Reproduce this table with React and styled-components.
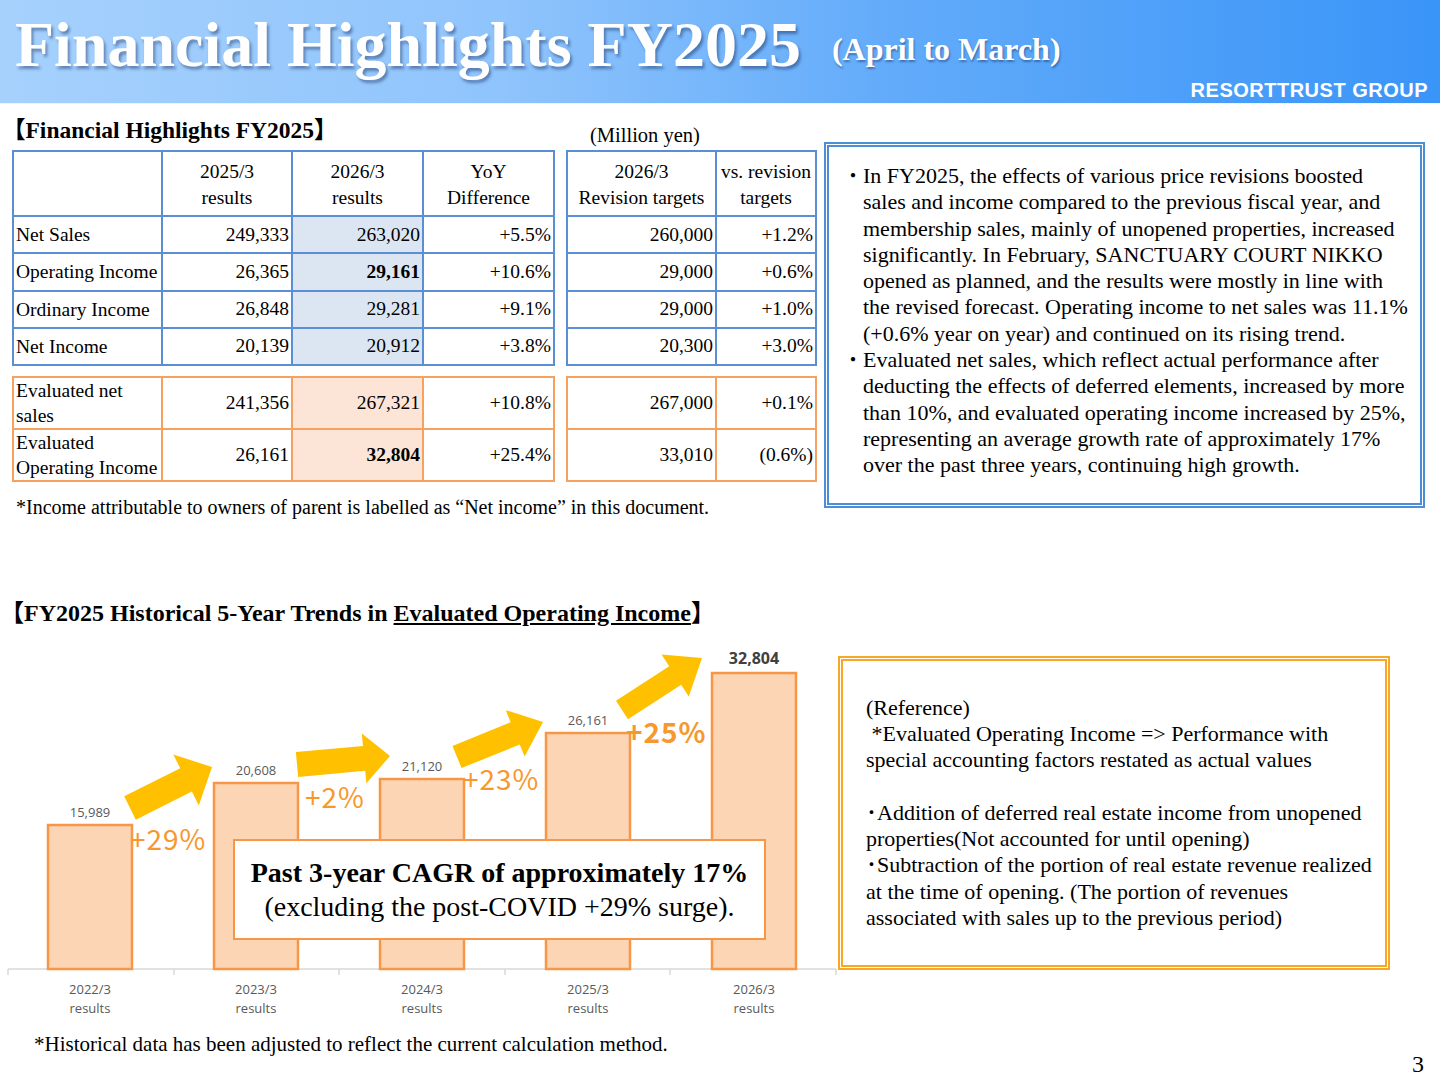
import React from 'react';
import styled, { createGlobalStyle } from 'styled-components';

const GlobalStyle = createGlobalStyle`
  html, body {
    margin: 0;
    padding: 0;
    background: #fff;
  }
`;

const serif = `"Liberation Serif", "Noto Sans CJK JP", serif`;

const Page = styled.div`
  width: 1440px;
  height: 1080px;
  overflow: hidden;
  background: #fff;
  font-family: ${serif};
  color: #000;
  display: flex;
  flex-direction: column;
`;

const Header = styled.header`
  height: 103px;
  flex: none;
  display: flex;
  flex-direction: column;
  background: linear-gradient(90deg, #a6d1fd 0%, #8fc4fc 35%, #62abfa 62%, #3a95f8 100%);
  border-bottom: 1px solid #eaf3fe;
`;

const TitleRow = styled.div`
  display: flex;
  align-items: flex-start;
  padding: 13px 0 0 15px;
`;

const Title = styled.h1`
  margin: 0;
  font-size: 64px;
  line-height: 64px;
  font-weight: bold;
  color: #fff;
  text-shadow: 2px 3px 3px rgba(20, 40, 90, 0.45);
`;

const Subtitle = styled.span`
  margin: 20px 0 0 31px;
  font-size: 32px;
  line-height: 32px;
  font-weight: bold;
  color: #fff;
  text-shadow: 1px 2px 2px rgba(20, 40, 90, 0.45);
`;

const Brand = styled.div`
  margin-top: auto;
  align-self: flex-end;
  padding: 0 12px 3px 0;
  font-family: "Liberation Sans", Arial, sans-serif;
  font-weight: bold;
  font-size: 20px;
  line-height: 20px;
  letter-spacing: 0.5px;
  color: #fff;
`;

const TopSection = styled.section`
  display: flex;
  align-items: flex-start;
  padding-left: 12px;
`;

const TableGrid = styled.div`
  display: grid;
  grid-template-columns: 541px 249px;
  column-gap: 13px;
  width: 804px;
`;

const SectionTitle = styled.h2`
  margin: 0;
  font-size: ${(p) => p.$size}px;
  line-height: 28px;
  font-weight: bold;
  white-space: nowrap;
  margin-left: ${(p) => p.$indent || 0}px;
`;

const HeadingCell = styled.div`
  height: 46px;
  padding-top: 12px;
  box-sizing: border-box;
`;

const UnitNote = styled.div`
  align-self: end;
  font-size: 20.5px;
  line-height: 28px;
  padding: 0 0 1px 24px;
`;

const Table = styled.table`
  border-collapse: collapse;
  table-layout: fixed;
  width: 100%;
  font-size: 19.5px;
  margin-top: ${(p) => p.$gap || 0}px;

  td, th {
    border: 2px solid ${(p) => p.$line};
    padding: 0 2px;
    font-weight: normal;
    white-space: nowrap;
  }
`;

const HeadRow = styled.tr`
  height: 65px;
  th {
    text-align: center;
    line-height: 26px;
    padding-top: 2px;
  }
`;

const BodyRow = styled.tr`
  height: ${(p) => p.$h}px;
`;

const Label = styled.td`
  text-align: left;
  line-height: 25px;
  white-space: normal !important;
`;

const Num = styled.td`
  text-align: right;
  background: ${(p) => p.$fill || 'transparent'};
  font-weight: ${(p) => (p.$bold ? 'bold' : 'normal')} !important;
`;

const Footnote = styled.p`
  grid-column: 1 / -1;
  margin: 12px 0 0 4px;
  font-size: 20px;
  line-height: 26px;
  white-space: nowrap;
`;

const SummaryBox = styled.div`
  margin: 38px 0 0 8px;
  width: 601px;
  height: 366px;
  box-sizing: border-box;
  border: 5px double #4d8fd6;
  padding: 16px 0 0 14px;
  font-size: 22px;
  line-height: 26.3px;
`;

const Bullet = styled.div`
  display: flex;
`;

const Dot = styled.span`
  width: 20px;
  flex: none;
  font-size: 20px;
`;

const Line = styled.div`
  white-space: pre;
  min-height: 26.3px;
`;

const BottomSection = styled.section`
  margin-top: 79px;
`;

const ChartRow = styled.div`
  display: flex;
  align-items: flex-start;
  margin-top: 13px;
`;

const ChartArea = styled.div`
  position: relative;
  width: 836px;
  height: 385px;
  flex: none;

  svg {
    display: block;
    overflow: visible;
  }
`;

const CagrBox = styled.div`
  position: absolute;
  left: 233px;
  top: 199px;
  width: 533px;
  height: 101px;
  box-sizing: border-box;
  border: 2px solid #f79646;
  background: #fff;
  display: flex;
  flex-direction: column;
  align-items: center;
  justify-content: center;
  font-size: 28px;
  line-height: 34px;
  white-space: nowrap;
`;

const CagrMain = styled.div`
  font-weight: bold;
`;

const ReferenceBox = styled.div`
  margin: 16px 0 0 2px;
  width: 552px;
  height: 314px;
  box-sizing: border-box;
  border: 5px double #f9a825;
  padding-left: 23px;
  display: flex;
  flex-direction: column;
  justify-content: center;
  font-size: 22px;
  line-height: 26.3px;
`;

const Footer = styled.footer`
  display: flex;
  justify-content: space-between;
  align-items: flex-start;
  margin-top: 6px;
  padding: 0 16px 0 34px;
`;

const FootNote2 = styled.div`
  font-size: 21px;
  line-height: 26px;
`;

const PageNum = styled.div`
  font-size: 24px;
  line-height: 28px;
  margin-top: 19px;
`;

const blueRows = [
  ['Net Sales', '249,333', '263,020', '+5.5%', '260,000', '+1.2%'],
  ['Operating Income', '26,365', '29,161', '+10.6%', '29,000', '+0.6%', true],
  ['Ordinary Income', '26,848', '29,281', '+9.1%', '29,000', '+1.0%'],
  ['Net Income', '20,139', '20,912', '+3.8%', '20,300', '+3.0%'],
];

const orangeRows = [
  ['Evaluated net sales', '241,356', '267,321', '+10.8%', '267,000', '+0.1%'],
  ['Evaluated Operating Income', '26,161', '32,804', '+25.4%', '33,010', '(0.6%)', true],
];

const BLUE = '#5b8fd5';
const ORANGE = '#f6a15e';

const bars = [
  { x: 48, top: 185, label: '15,989', cat: '2022/3' },
  { x: 214, top: 143, label: '20,608', cat: '2023/3' },
  { x: 380, top: 139, label: '21,120', cat: '2024/3' },
  { x: 546, top: 93, label: '26,161', cat: '2025/3' },
  { x: 712, top: 33, label: '32,804', cat: '2026/3', bold: true },
];

const arrows = [
  { t: [130, 168], p: [212, 127], sw: 26, hw: 57, hl: 29 },
  { t: [297, 124.5], p: [390, 116], sw: 25, hw: 50, hl: 26 },
  { t: [457, 117], p: [543, 82], sw: 24, hw: 50, hl: 30 },
  { t: [622, 70], p: [702, 18], sw: 22, hw: 50, hl: 32 },
];

const growth = [
  { x: 130, y: 210, text: '+29%' },
  { x: 305, y: 168, text: '+2%' },
  { x: 463, y: 150, text: '+23%' },
  { x: 626, y: 103, text: '+25%', bold: true },
];

function arrowPoints({ t, p, sw, hw, hl }) {
  const dx = p[0] - t[0];
  const dy = p[1] - t[1];
  const len = Math.hypot(dx, dy);
  const ux = dx / len;
  const uy = dy / len;
  const nx = -uy;
  const ny = ux;
  const bx = p[0] - ux * hl;
  const by = p[1] - uy * hl;
  const pts = [
    [t[0] + nx * sw / 2, t[1] + ny * sw / 2],
    [bx + nx * sw / 2, by + ny * sw / 2],
    [bx + nx * hw / 2, by + ny * hw / 2],
    p,
    [bx - nx * hw / 2, by - ny * hw / 2],
    [bx - nx * sw / 2, by - ny * sw / 2],
    [t[0] - nx * sw / 2, t[1] - ny * sw / 2],
  ];
  return pts.map((q) => q.join(',')).join(' ');
}

function Chart() {
  const base = 329;
  return (
    <svg width="836" height="385" viewBox="0 0 836 385">
      <line x1="8" y1={base} x2="836" y2={base} stroke="#d9d9d9" strokeWidth="1.5" />
      {[8, 174, 339, 505, 670, 836].map((x) => (
        <line key={x} x1={x} y1={base} x2={x} y2={base + 6} stroke="#d9d9d9" strokeWidth="1.5" />
      ))}
      {bars.map((b) => (
        <g key={b.cat}>
          <rect x={b.x} y={b.top} width="84" height={base - b.top} fill="#fcd5b5" stroke="#f79646" strokeWidth="2.5" />
          <text
            x={b.x + 42}
            y={b.top - (b.bold ? 9 : 8)}
            textAnchor="middle"
            fontFamily="'Open Sans', sans-serif"
            fontSize={b.bold ? 16 : 13}
            fontWeight={b.bold ? 'bold' : 'normal'}
            fill={b.bold ? '#404040' : '#595959'}
          >
            {b.label}
          </text>
          <text x={b.x + 42} y="354" textAnchor="middle" fontFamily="'Open Sans', sans-serif" fontSize="13" fill="#595959">
            {b.cat}
          </text>
          <text x={b.x + 42} y="373" textAnchor="middle" fontFamily="'Open Sans', sans-serif" fontSize="13" fill="#595959">
            results
          </text>
        </g>
      ))}
      {arrows.map((a, i) => (
        <polygon key={i} points={arrowPoints(a)} fill="#ffc000" />
      ))}
      {growth.map((g) => (
        <text
          key={g.text}
          x={g.x}
          y={g.y}
          fontFamily="'Noto Sans CJK JP', 'Noto Sans', sans-serif"
          fontSize="28"
          fontWeight={g.bold ? 'bold' : 'normal'}
          fill="#f7982e"
          letterSpacing="1"
        >
          {g.text}
        </text>
      ))}
    </svg>
  );
}

export default function App() {
  return (
    <Page>
      <GlobalStyle />
      <Header>
        <TitleRow>
          <Title>Financial Highlights FY2025</Title>
          <Subtitle>(April to March)</Subtitle>
        </TitleRow>
        <Brand>RESORTTRUST GROUP</Brand>
      </Header>

      <TopSection>
        <TableGrid>
          <HeadingCell>
            <SectionTitle $size={23.5} $indent={-10}>【Financial Highlights FY2025】</SectionTitle>
          </HeadingCell>
          <UnitNote>(Million yen)</UnitNote>

          <Table $line={BLUE}>
            <colgroup>
              <col style={{ width: 149 }} />
              <col style={{ width: 130 }} />
              <col style={{ width: 131 }} />
              <col style={{ width: 131 }} />
            </colgroup>
            <thead>
              <HeadRow>
                <th />
                <th>2025/3<br />results</th>
                <th>2026/3<br />results</th>
                <th>YoY<br />Difference</th>
              </HeadRow>
            </thead>
            <tbody>
              {blueRows.map((r) => (
                <BodyRow key={r[0]} $h={37.25}>
                  <Label>{r[0]}</Label>
                  <Num>{r[1]}</Num>
                  <Num $fill="#dce6f2" $bold={r[6]}>{r[2]}</Num>
                  <Num>{r[3]}</Num>
                </BodyRow>
              ))}
            </tbody>
          </Table>

          <Table $line={BLUE}>
            <colgroup>
              <col style={{ width: 149 }} />
              <col style={{ width: 100 }} />
            </colgroup>
            <thead>
              <HeadRow>
                <th>2026/3<br />Revision targets</th>
                <th>vs. revision<br />targets</th>
              </HeadRow>
            </thead>
            <tbody>
              {blueRows.map((r) => (
                <BodyRow key={r[0]} $h={37.25}>
                  <Num>{r[4]}</Num>
                  <Num>{r[5]}</Num>
                </BodyRow>
              ))}
            </tbody>
          </Table>

          <Table $line={ORANGE} $gap={10}>
            <colgroup>
              <col style={{ width: 149 }} />
              <col style={{ width: 130 }} />
              <col style={{ width: 131 }} />
              <col style={{ width: 131 }} />
            </colgroup>
            <tbody>
              {orangeRows.map((r) => (
                <BodyRow key={r[0]} $h={51.5}>
                  <Label>{r[0]}</Label>
                  <Num>{r[1]}</Num>
                  <Num $fill="#fce4d6" $bold={r[6]}>{r[2]}</Num>
                  <Num>{r[3]}</Num>
                </BodyRow>
              ))}
            </tbody>
          </Table>

          <Table $line={ORANGE} $gap={10}>
            <colgroup>
              <col style={{ width: 149 }} />
              <col style={{ width: 100 }} />
            </colgroup>
            <tbody>
              {orangeRows.map((r) => (
                <BodyRow key={r[0]} $h={51.5}>
                  <Num>{r[4]}</Num>
                  <Num>{r[5]}</Num>
                </BodyRow>
              ))}
            </tbody>
          </Table>

          <Footnote>*Income attributable to owners of parent is labelled as “Net income” in this document.</Footnote>
        </TableGrid>

        <SummaryBox>
          <Bullet>
            <Dot>・</Dot>
            <div>
              <Line>In FY2025, the effects of various price revisions boosted</Line>
              <Line>sales and income compared to the previous fiscal year, and</Line>
              <Line>membership sales, mainly of unopened properties, increased</Line>
              <Line>significantly. In February, SANCTUARY COURT NIKKO</Line>
              <Line>opened as planned, and the results were mostly in line with</Line>
              <Line>the revised forecast. Operating income to net sales was 11.1%</Line>
              <Line>(+0.6% year on year) and continued on its rising trend.</Line>
            </div>
          </Bullet>
          <Bullet>
            <Dot>・</Dot>
            <div>
              <Line>Evaluated net sales, which reflect actual performance after</Line>
              <Line>deducting the effects of deferred elements, increased by more</Line>
              <Line>than 10%, and evaluated operating income increased by 25%,</Line>
              <Line>representing an average growth rate of approximately 17%</Line>
              <Line>over the past three years, continuing high growth.</Line>
            </div>
          </Bullet>
        </SummaryBox>
      </TopSection>

      <BottomSection>
        <SectionTitle $size={24}>
          【FY2025 Historical 5-Year Trends in <u>Evaluated Operating Income</u>】
        </SectionTitle>
        <ChartRow>
          <ChartArea>
            <Chart />
            <CagrBox>
              <CagrMain>Past 3-year CAGR of approximately 17%</CagrMain>
              <div>(excluding the post-COVID +29% surge).</div>
            </CagrBox>
          </ChartArea>
          <ReferenceBox>
            <Line>(Reference)</Line>
            <Line> *Evaluated Operating Income =&gt; Performance with</Line>
            <Line>special accounting factors restated as actual values</Line>
            <Line> </Line>
            <Line>･Addition of deferred real estate income from unopened</Line>
            <Line>properties(Not accounted for until opening)</Line>
            <Line>･Subtraction of the portion of real estate revenue realized</Line>
            <Line>at the time of opening. (The portion of revenues</Line>
            <Line>associated with sales up to the previous period)</Line>
          </ReferenceBox>
        </ChartRow>
        <Footer>
          <FootNote2>*Historical data has been adjusted to reflect the current calculation method.</FootNote2>
          <PageNum>3</PageNum>
        </Footer>
      </BottomSection>
    </Page>
  );
}
